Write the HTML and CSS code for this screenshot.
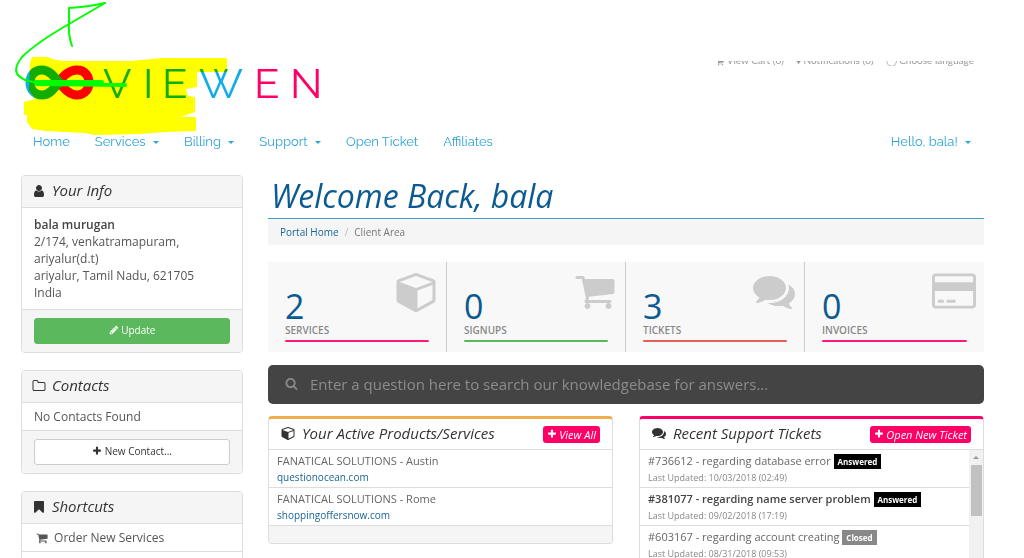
FILE: index.html
```html
<!DOCTYPE html>
<html lang="en">
<head>
	<meta charset="UTF-8">
	<meta name="viewport" content="width=device-width, initial-scale=1">
	<title>Client Area</title>
	<link rel="stylesheet" href="styles.css">
</head>
<body>

	<!-- icons -->
	<svg class="sprite" aria-hidden="true">
		<symbol id="user" viewBox="0 0 1792 1792"><path d="M1536 1399q0 109-62.5 187t-150.5 78h-854q-88 0-150.5-78t-62.5-187q0-85 8.5-160.5t31.5-152 58.5-131 94-89 134.5-34.5q131 128 313 128t313-128q76 0 134.5 34.5t94 89 58.5 131 31.5 152 8.5 160.5zm-256-887q0 159-112.5 271.5t-271.5 112.5-271.5-112.5-112.5-271.5 112.5-271.5 271.5-112.5 271.5 112.5 112.5 271.5z"/></symbol>
		<symbol id="pencil" viewBox="0 0 1792 1792"><path d="M491 1536l91-91-235-235-91 91v107h128v128h107zm523-928q0-22-22-22-10 0-17 7l-542 542q-7 7-7 17 0 22 22 22 10 0 17-7l542-542q7-7 7-17zm-54-192l416 416-832 832h-416v-416zm683 96q0 53-37 90l-166 166-416-416 166-165q36-38 90-38 53 0 91 38l235 234q37 39 37 91z"/></symbol>
		<symbol id="plus" viewBox="0 0 1792 1792"><path d="M1600 736v192q0 40-28 68t-68 28h-416v416q0 40-28 68t-68 28h-192q-40 0-68-28t-28-68v-416h-416q-40 0-68-28t-28-68v-192q0-40 28-68t68-28h416v-416q0-40 28-68t68-28h192q40 0 68 28t28 68v416h416q40 0 68 28t28 68z"/></symbol>
		<symbol id="cart" viewBox="0 0 1792 1792"><path d="M704 1536q0 52-38 90t-90 38-90-38-38-90 38-90 90-38 90 38 38 90zm896 0q0 52-38 90t-90 38-90-38-38-90 38-90 90-38 90 38 38 90zm128-1088v512q0 24-16.5 42.5t-40.5 21.5l-1044 122q13 60 13 70 0 16-24 64h920q26 0 45 19t19 45-19 45-45 19h-1024q-26 0-45-19t-19-45q0-11 8-31.5t16-36 21.5-40 15.5-29.5l-177-823h-204q-26 0-45-19t-19-45 19-45 45-19h256q16 0 28.5 6.5t19.5 15.5 13 24.5 8 26 5.5 29.5 4.5 26h1201q26 0 45 19t19 45z"/></symbol>
		<symbol id="folder" viewBox="0 0 1792 1792"><path d="M1600 1312v-704q0-40-28-68t-68-28h-704q-40 0-68-28t-28-68v-64q0-40-28-68t-68-28h-320q-40 0-68 28t-28 68v960q0 40 28 68t68 28h1216q40 0 68-28t28-68zm128-704v704q0 92-66 158t-158 66h-1216q-92 0-158-66t-66-158v-960q0-92 66-158t158-66h320q92 0 158 66t66 158v32h672q92 0 158 66t66 158z"/></symbol>
		<symbol id="bookmark" viewBox="0 0 1792 1792"><path d="M1420 128q23 0 44 9 33 13 52.5 41t19.5 62v1289q0 34-19.5 62t-52.5 41q-19 8-44 8-48 0-83-32l-441-424-441 424q-36 33-83 33-23 0-44-9-33-13-52.5-41t-19.5-62v-1289q0-34 19.5-62t52.5-41q21-9 44-9h1048z"/></symbol>
		<symbol id="cube" viewBox="0 0 1664 1792"><path d="M896 1629l640-349v-636l-640 233v752zm-64-865l698-254-698-254-698 254zm832-252v768q0 35-18 65t-49 47l-704 384q-28 16-61 16t-61-16l-704-384q-31-17-49-47t-18-65v-768q0-40 23-73t61-47l704-256q22-8 44-8t44 8l704 256q38 14 61 47t23 73z"/></symbol>
		<symbol id="comments" viewBox="0 0 1792 1792"><path d="M1408 768q0 139-94 257t-256.5 186.5-353.5 68.5q-86 0-176-16-124 88-278 128-36 9-86 16h-3q-11 0-20.5-8t-11.5-21q-1-3-1-6.5t.5-6.5 2-6l2.5-5 3.5-5.5 4-5 4.5-5 4-4.5q5-6 23-25t26-29.5 22.5-29 25-38.5 20.5-44q-124-72-195-177t-71-224q0-139 94-257t256.5-186.5 353.5-68.5 353.5 68.5 256.5 186.5 94 257zm384 256q0 120-71 224.5t-195 176.5q10 24 20.5 44t25 38.5 22.5 29 26 29.5 23 25q1 1 4 4.5t4.5 5 4 5 3.5 5.5l2.5 5 2 6 .5 6.5-1 6.5q-3 14-13 22t-22 7q-50-7-86-16-154-40-278-128-90 16-176 16-271 0-472-132 58 4 88 4 161 0 309-45t264-129q125-92 192-212t67-254q0-77-23-152 129 71 204 178t75 230z"/></symbol>
		<symbol id="card" viewBox="0 0 1920 1792"><path d="M1760 128q66 0 113 47t47 113v1216q0 66-47 113t-113 47H160q-66 0-113-47T0 1504V288q0-66 47-113t113-47h1600zM160 256q-13 0-22.5 9.5T128 288v224h1664V288q0-13-9.5-22.5T1760 256H160zm1600 1280q13 0 22.5-9.5t9.5-22.5V896H128v608q0 13 9.5 22.5t22.5 9.5h1600zM256 1408v-128h256v128H256zm384 0v-128h384v128H640z"/></symbol>
		<symbol id="search" viewBox="0 0 1792 1792"><path d="M1216 832q0-185-131.5-316.5t-316.5-131.5-316.5 131.5-131.5 316.5 131.5 316.5 316.5 131.5 316.5-131.5 131.5-316.5zm512 832q0 52-38 90t-90 38q-54 0-90-38l-343-342q-179 124-399 124-143 0-273.5-55.5t-225-150-150-225-55.5-273.5 55.5-273.5 150-225 225-150 273.5-55.5 273.5 55.5 225 150 150 225 55.5 273.5q0 220-124 399l343 343q37 37 37 90z"/></symbol>
	</svg>

	<header class="header">
		<a class="logo" href="#" aria-label="VIEWEN">
			<svg class="logo-art" width="340" height="140" viewBox="0 0 340 140">
				<g fill="none" stroke-width="9">
					<path stroke="#ff0000" d="M55 86C64 75 69 70 77 70C93 70 93 95 77 95C70 95 65 90 57 80"/>
					<path stroke="#12ade8" d="M62 86C53 75 49 70 42 70C26 70 26 95 42 95C49 95 53 90 62 79"/>
				</g>
				<text class="logo-text" y="98"><tspan class="blue" x="103 143 162 199">VIEW</tspan><tspan class="pink" x="254 290">EN</tspan></text>
				<path class="marker" d="M32 57L48 57Q54 61 70 61L130 61L162 58L227 58L227 72L197 72L197 87L186 89L188 96L195 97L195 112L181 117L196 117L196 131L166 132L140 134L95 135L85 133L45 131L32 129L27 122L27 115L24 115L24 102L35 99L29 90L30 62Z"/>
				<g fill="none" stroke="#00ff00" stroke-linecap="round" stroke-linejoin="round">
					<path stroke-width="2" d="M72 46Q68 35 69 22L69 8Q88 7 105 3"/>
					<path stroke-width="2" d="M105 3Q88 13 69 24Q36 43 22 57Q12 70 19 76Q24 81 34 82"/>
					<path stroke-width="4" d="M36 82L102 82M36 84L125 85"/>
				</g>
			</svg>
		</a>
		<div class="top-links">
			<a href="#"><svg class="icon"><use href="#cart"/></svg> View Cart (0)</a>
			<a href="#">♦ Notifications (0)</a>
			<a href="#">◯ Choose language</a>
		</div>
	</header>

	<nav class="nav">
		<a href="#">Home</a>
		<a href="#">Services <i class="caret"></i></a>
		<a href="#">Billing <i class="caret"></i></a>
		<a href="#">Support <i class="caret"></i></a>
		<a href="#">Open Ticket</a>
		<a href="#">Affiliates</a>
		<a class="account" href="#">Hello, bala! <i class="caret"></i></a>
	</nav>

	<div class="page">
		<aside class="sidebar">
			<section class="panel">
				<h3 class="panel-heading"><svg class="icon"><use href="#user"/></svg> Your Info</h3>
				<address class="panel-body">
					<strong>bala murugan</strong><br>
					2/174, venkatramapuram,<br>
					ariyalur(d.t)<br>
					ariyalur, Tamil Nadu, 621705<br>
					India
				</address>
				<div class="panel-footer">
					<button class="btn btn-success" type="button"><svg class="icon"><use href="#pencil"/></svg> Update</button>
				</div>
			</section>

			<section class="panel">
				<h3 class="panel-heading"><svg class="icon"><use href="#folder"/></svg> Contacts</h3>
				<div class="panel-row">No Contacts Found</div>
				<div class="panel-footer">
					<button class="btn" type="button"><svg class="icon"><use href="#plus"/></svg> New Contact...</button>
				</div>
			</section>

			<section class="panel">
				<h3 class="panel-heading"><svg class="icon"><use href="#bookmark"/></svg> Shortcuts</h3>
				<a class="panel-row shortcut" href="#"><svg class="icon"><use href="#cart"/></svg> Order New Services</a>
				<div class="panel-row"></div>
			</section>
		</aside>

		<main class="main">
			<h1>Welcome Back, bala</h1>
			<ol class="breadcrumb">
				<li><a href="#">Portal Home</a></li>
				<li>Client Area</li>
			</ol>

			<div class="tiles">
				<a class="tile" href="#">
					<svg class="tile-icon"><use href="#cube"/></svg>
					<span class="stat">2</span>
					<span class="title">SERVICES</span>
					<span class="bar pink-bar"></span>
				</a>
				<a class="tile" href="#">
					<svg class="tile-icon"><use href="#cart"/></svg>
					<span class="stat">0</span>
					<span class="title">SIGNUPS</span>
					<span class="bar green-bar"></span>
				</a>
				<a class="tile" href="#">
					<svg class="tile-icon"><use href="#comments"/></svg>
					<span class="stat">3</span>
					<span class="title">TICKETS</span>
					<span class="bar red-bar"></span>
				</a>
				<a class="tile" href="#">
					<svg class="tile-icon"><use href="#card"/></svg>
					<span class="stat">0</span>
					<span class="title">INVOICES</span>
					<span class="bar pink-bar"></span>
				</a>
			</div>

			<form class="search">
				<svg class="icon"><use href="#search"/></svg>
				<input type="text" aria-label="Search the knowledgebase" placeholder="Enter a question here to search our knowledgebase for answers...">
			</form>

			<div class="cards">
				<section class="panel card card-gold">
					<h3 class="card-heading">
						<svg class="icon"><use href="#cube"/></svg> Your Active Products/Services
						<a class="btn-xs" href="#"><svg class="icon"><use href="#plus"/></svg> View All</a>
					</h3>
					<ul class="list">
						<li>FANATICAL SOLUTIONS - Austin<br><a href="#">questionocean.com</a></li>
						<li>FANATICAL SOLUTIONS - Rome<br><a href="#">shoppingoffersnow.com</a></li>
					</ul>
					<div class="card-footer"></div>
				</section>

				<section class="panel card card-pink">
					<h3 class="card-heading">
						<svg class="icon"><use href="#comments"/></svg> Recent Support Tickets
						<a class="btn-xs" href="#"><svg class="icon"><use href="#plus"/></svg> Open New Ticket</a>
					</h3>
					<div class="scroll-area">
						<ul class="list">
							<li>#736612 - regarding database error <span class="label">Answered</span><br><small>Last Updated: 10/03/2018 (02:49)</small></li>
							<li><b>#381077 - regarding name server problem</b> <span class="label">Answered</span><br><small>Last Updated: 09/02/2018 (17:19)</small></li>
							<li>#603167 - regarding account creating <span class="label label-closed">Closed</span><br><small>Last Updated: 08/31/2018 (09:53)</small></li>
						</ul>
						<div class="scrollbar"><i class="arrow-up"></i><i class="thumb"></i></div>
					</div>
				</section>
			</div>
		</main>
	</div>

</body>
</html>
```

FILE: styles.css
```css
* {
	box-sizing: border-box;
}

html, body {
	height: 100%;
	margin: 0;
	overflow: hidden;
}

body {
	background-color: #ffffff;
	color: #555555;
	font-family: "Open Sans", "Noto Sans", sans-serif;
	font-size: 12px;
	line-height: 17px;
}

a {
	color: #1a6496;
	text-decoration: none;
}

.sprite {
	display: none;
}

.icon {
	width: 12px;
	height: 12px;
	fill: currentColor;
	vertical-align: -2px;
}

/* header */
.header {
	display: flex;
	justify-content: space-between;
	height: 130px;
	padding-right: 50px;
}

.logo-art {
	display: block;
	position: relative;
	pointer-events: none;
}

.logo-text {
	font-family: Raleway, Lato, sans-serif;
	font-size: 42px;
	font-weight: 400;
}

.blue {
	fill: #12ade8;
}

.pink {
	fill: #ff0066;
}

.marker {
	fill: #ffff00;
	mix-blend-mode: multiply;
}

/* only the lower edge of these links shows */
.top-links {
	display: flex;
	align-items: flex-end;
	gap: 12px;
	height: 5px;
	margin-top: 61px;
	overflow: hidden;
	font-family: Lato, sans-serif;
	font-size: 10px;
	line-height: 12px;
}

.top-links a {
	color: #999999;
}

.top-links .icon {
	width: 8px;
	height: 8px;
}

/* nav */
.nav {
	display: flex;
	gap: 25px;
	padding: 2px 53px 0 33px;
	font-family: Raleway, Lato, sans-serif;
	font-size: 13px;
	line-height: 20px;
}

.nav a {
	color: #2fa4d7;
}

.nav .account {
	margin-left: auto;
}

.caret {
	display: inline-block;
	margin-left: 4px;
	vertical-align: 2px;
	border-top: 3px solid;
	border-left: 3px solid transparent;
	border-right: 3px solid transparent;
}

.page {
	display: grid;
	grid-template-columns: 222px 1fr;
	gap: 25px;
	padding: 23px 40px 0 21px;
}

/* panels */
.sidebar {
	display: flex;
	flex-direction: column;
	gap: 17px;
}

.panel {
	border: 1px solid #dddddd;
	border-radius: 4px;
	background-color: #ffffff;
	overflow: hidden;
}

.panel-heading,
.card-heading {
	margin: 0;
	color: #333333;
	font-size: 15px;
	font-style: italic;
	font-weight: 500;
}

.panel-heading {
	padding: 5px 12px 7px;
	background-color: #f5f5f5;
	line-height: 19px;
}

.panel-heading .icon,
.card-heading > .icon {
	width: 14px;
	height: 14px;
}

.panel-heading .icon {
	margin-left: -2px;
	margin-right: 2px;
}

.panel-body {
	padding: 8px 12px;
	border-top: 1px solid #dddddd;
	font-style: normal;
}

.panel-body strong {
	font-weight: 600;
	color: #444444;
}

.panel-row {
	display: block;
	min-height: 28px;
	padding: 5px 12px;
	border-top: 1px solid #dddddd;
	color: #555555;
}

.shortcut {
	padding-left: 14px;
}

.shortcut .icon {
	margin-right: 3px;
}

.panel-footer {
	padding: 8px 12px;
	border-top: 1px solid #dddddd;
	background-color: #f5f5f5;
}

.btn {
	display: block;
	width: 100%;
	height: 26px;
	padding: 0 6px 2px;
	border: 1px solid #cccccc;
	border-radius: 3px;
	background-color: #ffffff;
	color: #333333;
	font-family: inherit;
	font-size: 10px;
}

.btn .icon {
	width: 10px;
	height: 10px;
	vertical-align: -1px;
}

.btn-success {
	border-color: #5cb85c;
	background-color: #5cb85c;
	color: #ffffff;
}

/* main column */
.main {
	min-width: 0;
}

h1 {
	margin: 0;
	padding: 3px 3px 4px;
	border-bottom: 1px solid #3a9fc9;
	color: #0b5a91;
	font-size: 32px;
	font-style: italic;
	font-weight: 400;
	line-height: 36px;
}

.breadcrumb {
	display: flex;
	margin: 0 0 17px;
	padding: 5px 12px 4px;
	border-radius: 0 0 3px 3px;
	background-color: #f5f5f5;
	color: #777777;
	font-size: 10px;
	list-style: none;
}

.breadcrumb li + li::before {
	content: "/";
	padding: 0 6px;
	color: #bbbbbb;
}

.tiles {
	display: grid;
	grid-template-columns: repeat(4, 1fr);
	margin-bottom: 13px;
}

.tile {
	display: grid;
	position: relative;
	height: 90px;
	padding: 26px 17px 10px;
	border-right: 1px solid #cccccc;
	background-color: #f8f8f8;
}

.tile:last-child {
	border-right: 0;
}

.tile-icon {
	position: absolute;
	top: 8px;
	right: 8px;
	width: 44px;
	height: 42px;
	fill: #cccccc;
}

.stat {
	color: #0b5a91;
	font-size: 34px;
	line-height: 36px;
}

.title {
	color: #888888;
	font-size: 10px;
	font-weight: 600;
	line-height: 12px;
}

.bar {
	height: 2px;
	margin-top: 4px;
	border-radius: 1px;
}

.pink-bar {
	background-color: #ff1a75;
}

.green-bar {
	background-color: #5cb85c;
}

.red-bar {
	background-color: #e4605b;
}

.search {
	display: flex;
	align-items: center;
	gap: 12px;
	height: 39px;
	margin-bottom: 12px;
	padding: 0 17px 2px;
	border-radius: 5px;
	background-color: #444444;
	color: #888888;
}

.search .icon {
	width: 13px;
	height: 13px;
}

.search input {
	flex: 1;
	padding: 0;
	border: 0;
	outline: 0;
	background: none;
	color: #cccccc;
	font-family: inherit;
	font-size: 15px;
}

.search input::placeholder {
	color: #8c8c8c;
}

/* cards */
.cards {
	display: grid;
	grid-template-columns: 1fr 1fr;
	align-items: start;
	gap: 26px;
}

.card {
	border-top-width: 3px;
}

.card-gold {
	border-top-color: #f0ad4e;
}

.card-pink {
	border-top-color: #ff0066;
}

.card-heading {
	display: flex;
	align-items: center;
	gap: 7px;
	height: 30px;
	padding: 0 12px 2px;
}

.btn-xs {
	display: flex;
	align-items: center;
	gap: 2px;
	height: 17px;
	margin-top: 2px;
	margin-left: auto;
	padding: 0 4px;
	border-radius: 3px;
	background-color: #ff0066;
	color: #ffffff;
	font-size: 11px;
	font-weight: 500;
}

.btn-xs .icon {
	width: 10px;
	height: 10px;
}

.list {
	flex: 1;
	margin: 0;
	padding: 0;
	list-style: none;
}

.list li {
	height: 38px;
	padding: 3px 8px;
	border-top: 1px solid #dddddd;
	color: #666666;
	font-size: 11px;
	line-height: 16px;
}

.list a {
	font-size: 10px;
}

.list b {
	font-weight: 600;
	color: #444444;
}

.list small {
	color: #888888;
	font-size: 9px;
}

.label {
	display: inline-block;
	padding: 0 4px;
	background-color: #000000;
	color: #ffffff;
	font-size: 8px;
	font-weight: 700;
	line-height: 15px;
}

.label-closed {
	background-color: #888888;
}

.card-footer {
	height: 18px;
	border-top: 1px solid #dddddd;
	background-color: #f5f5f5;
}

.scroll-area {
	display: flex;
}

.scrollbar {
	display: flex;
	flex-direction: column;
	align-items: center;
	gap: 6px;
	width: 14px;
	padding-top: 6px;
	border-top: 1px solid #dddddd;
	background-color: #f1f1f1;
}

.arrow-up {
	border-bottom: 3px solid #999999;
	border-left: 3px solid transparent;
	border-right: 3px solid transparent;
}

.thumb {
	width: 11px;
	height: 51px;
	background-color: #c1c1c1;
}
```
